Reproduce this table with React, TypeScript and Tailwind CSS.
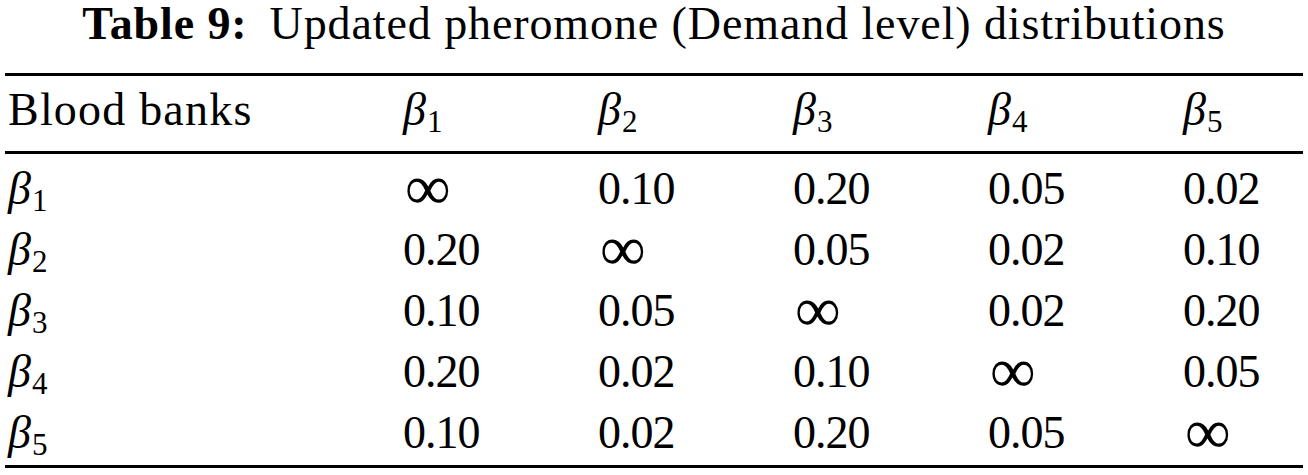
import React from 'react'

const rows: { label: string; values: string[] }[] = [
    { label: '1', values: ['∞', '0.10', '0.20', '0.05', '0.02'] },
    { label: '2', values: ['0.20', '∞', '0.05', '0.02', '0.10'] },
    { label: '3', values: ['0.10', '0.05', '∞', '0.02', '0.20'] },
    { label: '4', values: ['0.20', '0.02', '0.10', '∞', '0.05'] },
    { label: '5', values: ['0.10', '0.02', '0.20', '0.05', '∞'] },
]

const Beta = ({ n }: { n: string }) => (
    <span>
        <span className="italic">β</span>
        <span className="text-[31px] leading-[0] relative top-[7px] ml-[1px]">{n}</span>
    </span>
)

const Cell = ({ v }: { v: string }) =>
    v === '∞' ? (
        <span className="text-[64px] leading-[0] relative top-[5px] left-[2px]">∞</span>
    ) : (
        <span className="tracking-[-1px]">{v}</span>
    )

const gridCols = 'grid grid-cols-[398px_195px_195px_195px_195px_1fr]'

const App = () => {
    return (
        <div className="w-[1308px] h-[475px] bg-white text-black px-[5px] font-['Liberation_Serif',serif] text-[46px] leading-[46px]">
            <div className="h-[73px] pt-[1px] text-center tracking-[0.9px]">
                <span className="font-bold">Table 9:</span>
                <span className="ml-[22px]">Updated pheromone (Demand level) distributions</span>
            </div>

            <div className="border-t-[3px] border-b-[3px] border-black">
                <div className={`${gridCols} pt-[11px] pb-[18px] border-b-[3px] border-black`}>
                    <div className="pl-[3px] tracking-[1.2px]">Blood banks</div>
                    {['1', '2', '3', '4', '5'].map((n) => (
                        <div key={n}><Beta n={n} /></div>
                    ))}
                </div>

                <div className="pt-[12px] pb-[9px] flex flex-col gap-[15px]">
                    {rows.map((r) => (
                        <div key={r.label} className={gridCols}>
                            <div className="pl-[3px]"><Beta n={r.label} /></div>
                            {r.values.map((v, i) => (
                                <div key={i}><Cell v={v} /></div>
                            ))}
                        </div>
                    ))}
                </div>
            </div>
        </div>
    )
}

export default App
